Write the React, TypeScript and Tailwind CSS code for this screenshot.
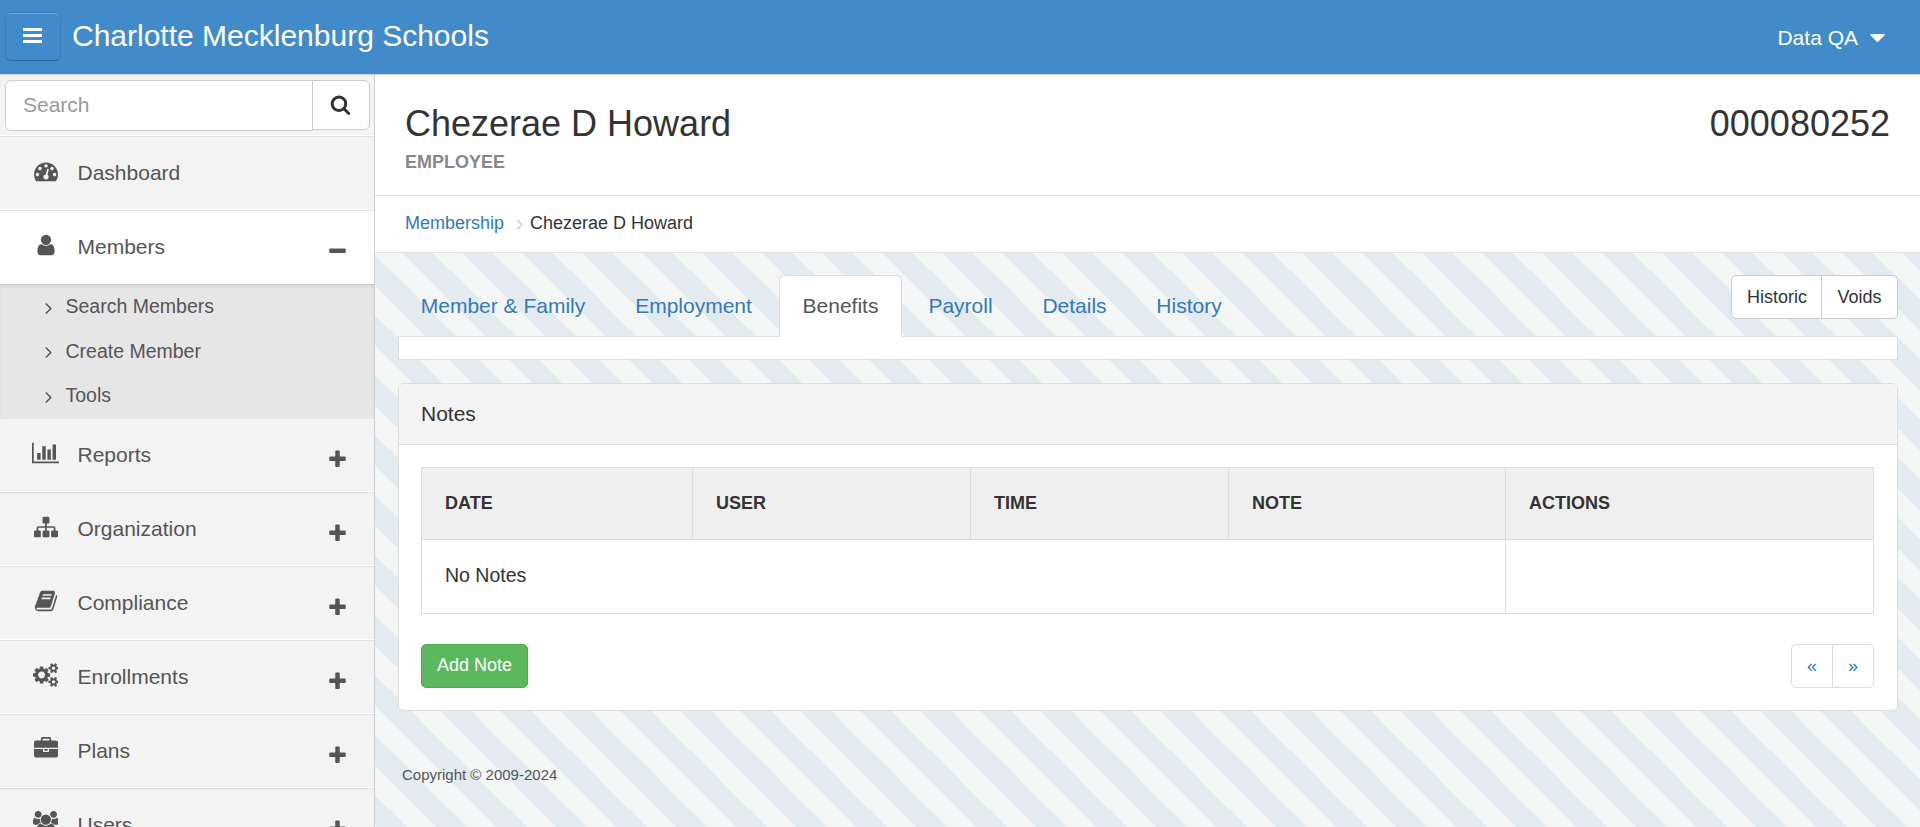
import React from 'react';

type GlyphProps = { d: string; w?: number; className?: string };

// Glyphs share a 1792-unit em; `w` is the advance width of wider ones.
function Glyph({ d, w = 1792, className = '' }: GlyphProps) {
  return (
    <svg viewBox={`0 0 ${w} 1792`} fill="currentColor" className={className} aria-hidden="true">
      <path d={d} />
    </svg>
  );
}

const ICON = {
  dashboard:
    'M384 1152q0-53-37.5-90.5t-90.5-37.5-90.5 37.5-37.5 90.5 37.5 90.5 90.5 37.5 90.5-37.5 37.5-90.5zm192-448q0-53-37.5-90.5t-90.5-37.5-90.5 37.5-37.5 90.5 37.5 90.5 90.5 37.5 90.5-37.5 37.5-90.5zm428 481l101-382q6-26-7.5-48.5t-38.5-29.5-48 6.5-30 39.5l-101 382q-60 5-107 43.5t-63 98.5q-20 77 20 146t117 89 146-20 89-117q16-60-6-117t-72-91zm660-33q0-53-37.5-90.5t-90.5-37.5-90.5 37.5-37.5 90.5 37.5 90.5 90.5 37.5 90.5-37.5 37.5-90.5zm-640-640q0-53-37.5-90.5t-90.5-37.5-90.5 37.5-37.5 90.5 37.5 90.5 90.5 37.5 90.5-37.5 37.5-90.5zm448 192q0-53-37.5-90.5t-90.5-37.5-90.5 37.5-37.5 90.5 37.5 90.5 90.5 37.5 90.5-37.5 37.5-90.5zm320 448q0 261-141 483-19 29-54 29h-1402q-35 0-54-29-141-221-141-483 0-182 71-348t191-286 286-191 348-71 348 71 286 191 191 286 71 348z',
  user: 'M1536 1399q0 109-62.5 187t-150.5 78h-854q-88 0-150.5-78t-62.5-187q0-85 8.5-160.5t31.5-152 58.5-131 94-89 134.5-34.5q131 128 313 128t313-128q76 0 134.5 34.5t94 89 58.5 131 31.5 152 8.5 160.5zm-256-887q0 159-112.5 271.5t-271.5 112.5-271.5-112.5-112.5-271.5 112.5-271.5 271.5-112.5 271.5 112.5 112.5 271.5z',
  chart:
    'M640 896v512h-256v-512h256zm384-512v1024h-256v-1024h256zm1024 1152v128h-2048v-1536h128v1408h1920zm-640-896v768h-256v-768h256zm384-384v1152h-256v-1152h256z',
  sitemap:
    'M1792 1248v320q0 40-28 68t-68 28h-320q-40 0-68-28t-28-68v-320q0-40 28-68t68-28h96v-192h-512v192h96q40 0 68 28t28 68v320q0 40-28 68t-68 28h-320q-40 0-68-28t-28-68v-320q0-40 28-68t68-28h96v-192h-512v192h96q40 0 68 28t28 68v320q0 40-28 68t-68 28h-320q-40 0-68-28t-28-68v-320q0-40 28-68t68-28h96v-192q0-52 38-90t90-38h512v-192h-96q-40 0-68-28t-28-68v-320q0-40 28-68t68-28h320q40 0 68 28t28 68v320q0 40-28 68t-68 28h-96v192h512q52 0 90 38t38 90v192h96q40 0 68 28t28 68z',
  book: 'M1703 478q40 57 18 129l-275 906q-19 64-76.5 107.5t-122.5 43.5h-923q-77 0-148.5-53.5t-99.5-131.5q-24-67-2-127 0-4 3-27t4-37q1-8-3-21.5t-3-19.5q2-11 8-21t16.5-23.5 16.5-23.5q23-38 45-91.5t30-91.5q3-10 .5-30t-.5-28q3-11 17-28t17-23q21-36 42-92t25-90q1-9-2.5-32t.5-28q4-13 22-30.5t22-22.5q19-26 42.5-84.5t27.5-96.5q1-8-3-25.5t-2-26.5q2-8 9-18t18-23 17-21q8-12 16.5-30.5t15-35 16-36 19.5-32 26.5-23.5 36-11.5 47.5 5.5l-1 3q38-9 51-9h761q74 0 114 56t18 130l-274 906q-36 119-71.5 153.5t-128.5 34.5h-869q-27 0-38 15-11 16-1 43 24 70 144 70h923q29 0 56-15.5t35-41.5l300-987q7-22 5-57 38 15 59 43zm-1064 2q-4 13 2 22.5t20 9.5h608q13 0 25.5-9.5t16.5-22.5l21-64q4-13-2-22.5t-20-9.5h-608q-13 0-25.5 9.5t-16.5 22.5zm-83 256q-4 13 2 22.5t20 9.5h608q13 0 25.5-9.5t16.5-22.5l21-64q4-13-2-22.5t-20-9.5h-608q-13 0-25.5 9.5t-16.5 22.5z',
  cogs: 'M896 896q0-106-75-181t-181-75-181 75-75 181 75 181 181 75 181-75 75-181zm768 512q0-52-38-90t-90-38-90 38-38 90q0 53 37.5 90.5t90.5 37.5 90.5-37.5 37.5-90.5zm0-1024q0-52-38-90t-90-38-90 38-38 90q0 53 37.5 90.5t90.5 37.5 90.5-37.5 37.5-90.5zm-384 421v185q0 10-7 19.5t-16 10.5l-155 24q-11 35-32 76 34 48 90 115 7 11 7 20 0 12-7 19-23 30-82.5 89.5t-78.5 59.5q-11 0-21-7l-115-90q-37 19-77 31-11 108-23 155-7 24-30 24h-186q-11 0-20-7.5t-10-17.5l-23-153q-34-10-75-31l-118 89q-7 7-20 7-11 0-21-8-144-133-144-160 0-9 7-19 10-14 41-53t47-61q-23-44-35-82l-152-24q-10-1-17-9.5t-7-19.5v-185q0-10 7-19.5t16-10.5l155-24q11-35 32-76-34-48-90-115-7-11-7-20 0-12 7-20 22-30 82-89t79-59q11 0 21 7l115 90q34-18 77-32 11-108 23-154 7-24 30-24h186q11 0 20 7.5t10 17.5l23 153q34 10 75 31l118-89q8-7 20-7 11 0 21 8 144 133 144 160 0 8-7 19-12 16-42 54t-45 60q23 48 34 82l152 23q10 2 17 10.5t7 19.5zm640 533v140q0 16-149 31-12 27-30 52 51 113 51 138 0 4-4 7-122 71-124 71-8 0-46-47t-52-68q-20 2-30 2t-30-2q-14 21-52 68t-46 47q-2 0-124-71-4-3-4-7 0-25 51-138-18-25-30-52-149-15-149-31v-140q0-16 149-31 13-29 30-52-51-113-51-138 0-4 4-7 4-2 35-20t59-34 30-16q8 0 46 46.5t52 67.5q20-2 30-2t30 2q51-71 92-112l6-2q4 0 124 70 4 3 4 7 0 25-51 138 17 23 30 52 149 15 149 31zm0-1024v140q0 16-149 31-12 27-30 52 51 113 51 138 0 4-4 7-122 71-124 71-8 0-46-47t-52-68q-20 2-30 2t-30-2q-14 21-52 68t-46 47q-2 0-124-71-4-3-4-7 0-25 51-138-18-25-30-52-149-15-149-31v-140q0-16 149-31 13-29 30-52-51-113-51-138 0-4 4-7 4-2 35-20t59-34 30-16q8 0 46 46.5t52 67.5q20-2 30-2t30 2q51-71 92-112l6-2q4 0 124 70 4 3 4 7 0 25-51 138 17 23 30 52 149 15 149 31z',
  briefcase:
    'M640 256h512v-128h-512v128zm1152 640v480q0 66-47 113t-113 47h-1472q-66 0-113-47t-47-113v-480h672v160q0 26 19 45t45 19h320q26 0 45-19t19-45v-160h672zm-768 0v128h-256v-128h256zm768-480v384h-1792v-384q0-66 47-113t113-47h352v-160q0-40 28-68t68-28h576q40 0 68 28t28 68v160h352q66 0 113 47t47 113z',
  users:
    'M593 896q-162 5-265 128h-134q-82 0-138-40.5t-56-118.5q0-353 124-353 6 0 43.5 21t97.5 42.5 119 21.5q67 0 133-23-5 37-5 66 0 139 81 256zm1071 637q0 120-73 189.5t-194 69.5h-874q-121 0-194-69.5t-73-189.5q0-53 3.5-103.5t14-109 26.5-108.5 43-97.5 62-81 85.5-53.5 111.5-20q10 0 43 21.5t73 48 107 48 135 21.5 135-21.5 107-48 73-48 43-21.5q61 0 111.5 20t85.5 53.5 62 81 43 97.5 26.5 108.5 14 109 3.5 103.5zm-1024-1277q0 106-75 181t-181 75-181-75-75-181 75-181 181-75 181 75 75 181zm704 384q0 159-112.5 271.5t-271.5 112.5-271.5-112.5-112.5-271.5 112.5-271.5 271.5-112.5 271.5 112.5 112.5 271.5zm576 225q0 78-56 118.5t-138 40.5h-134q-103-123-265-128 81-117 81-256 0-29-5-66 66 23 133 23 59 0 119-21.5t97.5-42.5 43.5-21q124 0 124 353zm-128-609q0 106-75 181t-181 75-181-75-75-181 75-181 181-75 181 75 75 181z',
  search:
    'M1216 832q0-185-131.5-316.5t-316.5-131.5-316.5 131.5-131.5 316.5 131.5 316.5 316.5 131.5 316.5-131.5 131.5-316.5zm512 832q0 52-38 90t-90 38q-54 0-90-38l-343-342q-179 124-399 124-143 0-273.5-55.5t-225-150-150-225-55.5-273.5 55.5-273.5 150-225 225-150 273.5-55.5 273.5 55.5 225 150 150 225 55.5 273.5q0 220-124 399l343 343q37 37 37 90z',
  plus: 'M1600 736v192q0 40-28 68t-68 28h-416v416q0 40-28 68t-68 28h-192q-40 0-68-28t-28-68v-416h-416q-40 0-68-28t-28-68v-192q0-40 28-68t68-28h416v-416q0-40 28-68t68-28h192q40 0 68 28t28 68v416h416q40 0 68 28t28 68z',
  minus: 'M1600 736v192q0 40-28 68t-68 28h-1216q-40 0-68-28t-28-68v-192q0-40 28-68t68-28h1216q40 0 68 28t28 68z',
  angle:
    'M1171 960q0 13-10 23l-466 466q-10 10-23 10t-23-10l-50-50q-10-10-10-23t10-23l393-393-393-393q-10-10-10-23t10-23l50-50q10-10 23-10t23 10l466 466q10 10 10 23z',
  caret:
    'M1408 704q0 26-19 45l-448 448q-19 19-45 19t-45-19l-448-448q-19-19-19-45t19-45 45-19h896q26 0 45 19t19 45z',
};

type NavEntry = { label: string; d: string; w?: number; toggle?: 'plus' | 'minus'; children?: string[] };

const NAV: NavEntry[] = [
  { label: 'Dashboard', d: ICON.dashboard },
  { label: 'Members', d: ICON.user, toggle: 'minus', children: ['Search Members', 'Create Member', 'Tools'] },
  { label: 'Reports', d: ICON.chart, w: 2048, toggle: 'plus' },
  { label: 'Organization', d: ICON.sitemap, toggle: 'plus' },
  { label: 'Compliance', d: ICON.book, toggle: 'plus' },
  { label: 'Enrollments', d: ICON.cogs, w: 1920, toggle: 'plus' },
  { label: 'Plans', d: ICON.briefcase, toggle: 'plus' },
  { label: 'Users', d: ICON.users, w: 1920, toggle: 'plus' },
];

const TABS = [
  { label: 'Member & Family', width: 'w-[210px]' },
  { label: 'Employment', width: 'w-[165px]' },
  { label: 'Benefits', width: 'w-[123px]', active: true },
  { label: 'Payroll', width: 'w-[111px]' },
  { label: 'Details', width: 'w-[111px]' },
  { label: 'History', width: 'w-[112px]' },
];

const COLUMNS = [
  { label: 'DATE', width: 'w-[271px]' },
  { label: 'USER', width: 'w-[278px]' },
  { label: 'TIME', width: 'w-[258px]' },
  { label: 'NOTE', width: 'w-[277px]' },
  { label: 'ACTIONS', width: 'w-[368px]' },
];

function TopBar() {
  return (
    <header className="flex h-[75px] shrink-0 items-start border-b border-[#ccd1d4] bg-[#428bca] text-white">
      <button
        aria-label="Toggle menu"
        className="mt-3 ml-[5px] flex h-[49px] w-[56px] items-center justify-center rounded-md border border-black/10 border-b-black/25 pr-0.5 shadow-[inset_0_1px_0_rgba(255,255,255,0.25)]"
      >
        <svg viewBox="0 0 19 15" className="mb-[3px] h-[15px] w-[19px]" fill="currentColor">
          <rect width="19" height="3" />
          <rect y="6" width="19" height="3" />
          <rect y="12" width="19" height="3" />
        </svg>
      </button>
      <h1 className="ml-[11px] text-[30px] leading-[72px]">Charlotte Mecklenburg Schools</h1>
      <a className="mr-[30px] ml-auto flex items-center text-[21px] leading-[76px]">
        Data QA
        <Glyph d={ICON.caret} className="ml-[7px] size-[25px] -translate-y-px" />
      </a>
    </header>
  );
}

function NavItem({ item }: { item: NavEntry }) {
  const open = item.toggle === 'minus';
  return (
    <li>
      <a
        className={
          'flex h-[74px] items-center border-t border-t-[#e2e2e2] border-b border-b-white pr-[26px] text-[21px] text-[#555] ' +
          (open ? 'bg-white' : 'bg-[#f3f3f3]')
        }
      >
        <span className="mb-1 ml-[30px] flex w-[31px] justify-center">
          <Glyph d={item.d} w={item.w} className="h-6 shrink-0" />
        </span>
        <span className="ml-[16.5px]">{item.label}</span>
        {item.toggle && <Glyph d={ICON[item.toggle]} className="mt-2 ml-auto size-[21px]" />}
      </a>
      {item.children && (
        <ul className="relative -mb-px h-[135px] border-t border-[#c9c9c9] bg-[#e6e6e6] shadow-[inset_0_2px_3px_rgba(0,0,0,0.07)]">
          {item.children.map((child) => (
            <li key={child} className="flex h-[44.5px] items-center pb-px pl-[39px] text-[19.5px] text-[#555]">
              <Glyph d={ICON.angle} className="mt-px size-[19.5px]" />
              <span className="ml-[7px]">{child}</span>
            </li>
          ))}
        </ul>
      )}
    </li>
  );
}

function Sidebar() {
  return (
    <aside className="w-[375px] shrink-0 overflow-hidden border-r border-[#ccd1d4] bg-[#f3f3f3]">
      <div className="flex h-[61px] items-start border-b border-white pt-[5px] pl-[5px]">
        <div className="flex h-[51px] w-[308px] items-center rounded-l-md border border-[#ccc] bg-white pb-0.5 pl-[17px] text-[21px] text-[#999]">
          Search
        </div>
        <button
          aria-label="Search"
          className="-ml-px flex h-[50px] w-[58px] items-center justify-center rounded-r-md border border-[#ccc] bg-white pr-px pb-0.5 text-[#333]"
        >
          <Glyph d={ICON.search} className="size-[21px]" />
        </button>
      </div>
      <ul>
        {NAV.map((item) => (
          <NavItem key={item.label} item={item} />
        ))}
      </ul>
    </aside>
  );
}

function PageHeader() {
  return (
    <>
      <section className="flex h-[121px] items-start justify-between border-b border-[#e2e2e2] bg-white px-[30px] text-[#333]">
        <div>
          <h2 className="pt-[29px] text-[36px] leading-[40px]">Chezerae D Howard</h2>
          <p className="mt-2 text-[18px] leading-5 font-bold text-[#888]">EMPLOYEE</p>
        </div>
        <p className="pt-[29px] text-[36px] leading-[40px]">000080252</p>
      </section>
      <nav className="flex h-[57px] items-center border-b border-[#e2e2e2] bg-white pb-px pl-[30px] text-[18px] text-[#333]">
        <a className="text-[#337ab7]">Membership</a>
        <Glyph d={ICON.angle} className="ml-[7px] size-[18px] text-[#ccc]" />
        <span className="ml-px">Chezerae D Howard</span>
      </nav>
    </>
  );
}

function Tabs() {
  return (
    <div>
      <div className="flex items-start justify-between">
        <ul className="relative z-10 -mb-px flex gap-[3px] text-[21px]">
          {TABS.map((tab) => (
            <li
              key={tab.label}
              className={
                'flex h-[62px] items-center justify-center rounded-t-md border pb-px ' +
                tab.width +
                (tab.active ? ' border-[#ddd] border-b-white bg-white text-[#555]' : ' border-transparent text-[#337ab7]')
              }
            >
              {tab.label}
            </li>
          ))}
        </ul>
        <div className="flex h-11 text-[18px] text-[#333]">
          <button className="w-[91px] rounded-l-[5px] border border-[#ccc] bg-white pl-px">Historic</button>
          <button className="-ml-px w-[77px] rounded-r-[5px] border border-[#ccc] bg-white">Voids</button>
        </div>
      </div>
      <div className="h-6 border border-[#ddd] bg-white" />
    </div>
  );
}

function NotesPanel() {
  return (
    <section className="mt-[23px] h-[328px] rounded-md border border-[#ddd] bg-white text-[#333]">
      <h3 className="flex h-[61px] items-center rounded-t-md border-b border-[#ddd] bg-[#f4f4f4] pl-[22px] text-[21px]">
        Notes
      </h3>
      <div className="pt-[22px] pr-[23px] pl-[22px]">
        <table className="w-full table-fixed border-collapse text-left">
          <thead>
            <tr className="h-[72px] bg-[#efefef] text-[18px]">
              {COLUMNS.map((c) => (
                <th key={c.label} className={'border border-[#ddd] p-0 pl-[23px] font-bold ' + c.width}>
                  {c.label}
                </th>
              ))}
            </tr>
          </thead>
          <tbody>
            <tr className="h-[74px] text-[19.5px]">
              <td colSpan={4} className="border border-[#ddd] p-0 pb-0.5 pl-[23px]">
                No Notes
              </td>
              <td className="border border-[#ddd]" />
            </tr>
          </tbody>
        </table>
        <div className="mt-[30px] flex h-11 items-stretch justify-between text-[18px]">
          <button className="w-[107px] rounded-[5px] border border-[#4cae4c] bg-[#5cb85c] pb-0.5 text-white">
            Add Note
          </button>
          <div className="flex text-[#337ab7]">
            <button className="w-[42px] rounded-l-[5px] border border-[#ddd] bg-white">«</button>
            <button className="-ml-px w-[42px] rounded-r-[5px] border border-[#ddd] bg-white">»</button>
          </div>
        </div>
      </div>
    </section>
  );
}

export default function App() {
  return (
    <div className="flex h-[827px] w-full flex-col overflow-hidden bg-[#f4f6f5] bg-[linear-gradient(45deg,#e3eaf0_25%,#f4f6f5_25%,#f4f6f5_50%,#e3eaf0_50%,#e3eaf0_75%,#f4f6f5_75%)] bg-[length:60px_60px] bg-[position:30px_0px] font-['Liberation_Sans',Arial,sans-serif]">
      <TopBar />
      <div className="flex min-h-0 flex-1">
        <Sidebar />
        <main className="min-w-0 flex-1">
          <PageHeader />
          <div className="pt-[22px] pr-[22px] pl-[23px]">
            <Tabs />
            <NotesPanel />
            <footer className="mt-[53px] pl-1 text-[15px] leading-[22px] text-[#555]">Copyright © 2009-2024</footer>
          </div>
        </main>
      </div>
    </div>
  );
}
